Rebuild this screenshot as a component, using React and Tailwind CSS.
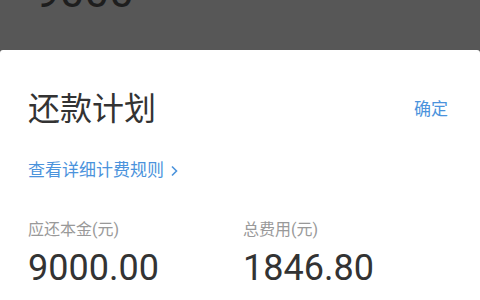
import React from "react";

const FONT = { fontFamily: 'Roboto, "Noto Sans CJK SC", sans-serif' };

const Amount = ({ label, value }) => (
  <div className="flex flex-col">
    <span className="text-[16px] leading-[16px] text-[#999999]">{label}</span>
    <span className="mt-[12px] text-[36px] leading-none text-[#333333]">{value}</span>
  </div>
);

const App = () => {
  return (
    <div className="w-[480px] h-[300px] overflow-hidden bg-[#575757] flex flex-col" style={FONT}>
      {/* dimmed page behind the sheet */}
      <div className="h-[50px] shrink-0 overflow-hidden">
        <div className="-mt-[30px] pl-[35px] text-[44px] leading-none text-[#1e1e1e]">9000</div>
      </div>

      {/* bottom sheet */}
      <div className="flex-1 bg-white rounded-t-[3px] pl-[28px] pr-[32px] pt-[43px]">
        <div className="flex items-center justify-between">
          <h2 className="text-[32px] leading-[32px] text-[#333333]">还款计划</h2>
          <button className="text-[17px] leading-[17px] text-[#4b93dc]">确定</button>
        </div>

        <a className="mt-[37px] flex items-center gap-[6px] text-[17px] leading-[17px] text-[#4b93dc]">
          查看详细计费规则
          <svg width="8" height="12" viewBox="0 0 8 12" fill="none" stroke="currentColor" strokeWidth="1.6">
            <path d="M2 1.5 L6.5 6 L2 10.5" />
          </svg>
        </a>

        <div className="mt-[43px] grid grid-cols-[215px_1fr]">
          <Amount label="应还本金(元)" value="9000.00" />
          <Amount label="总费用(元)" value="1846.80" />
        </div>
      </div>
    </div>
  );
};

export default App;
